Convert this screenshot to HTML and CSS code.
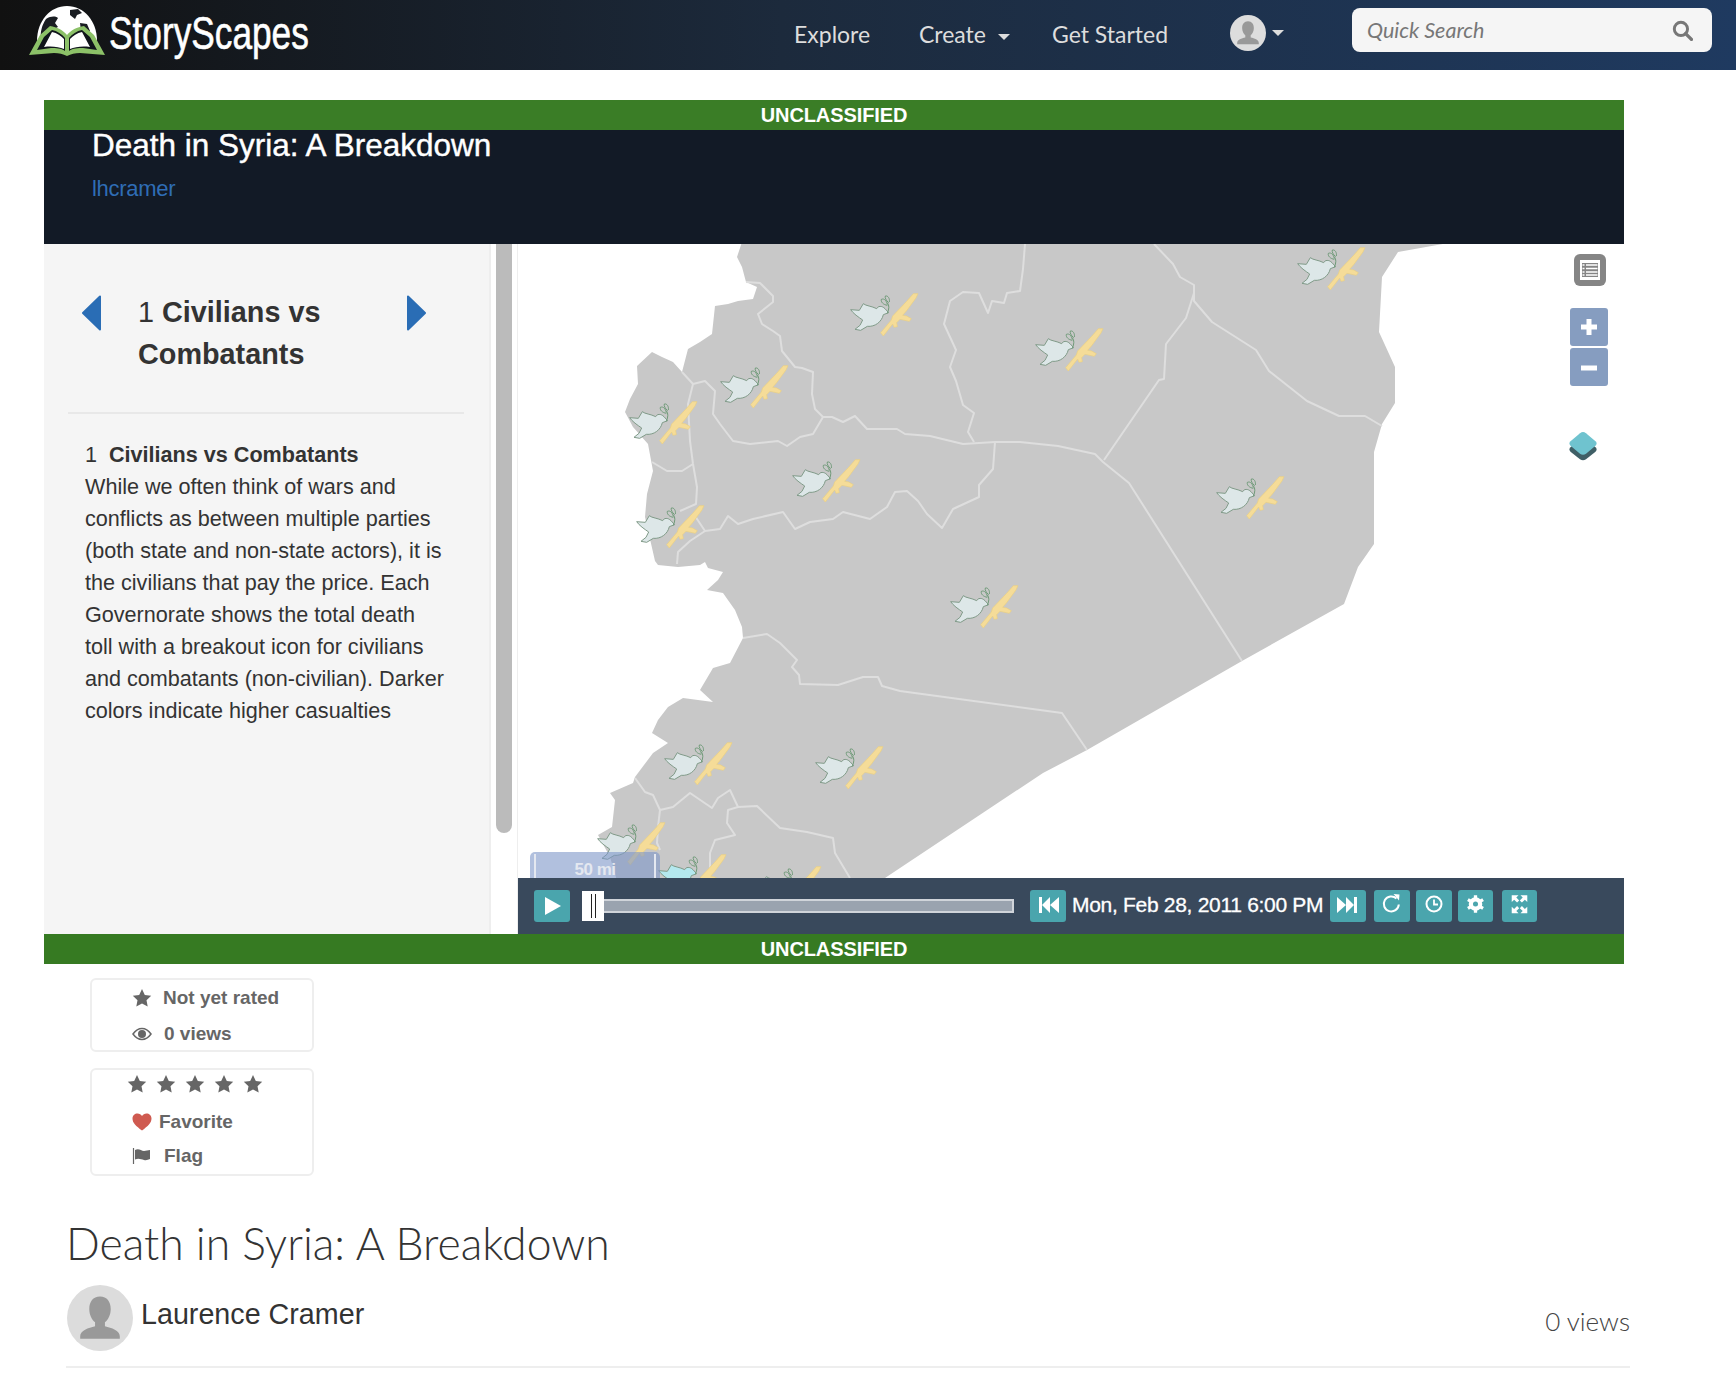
FILE: index.html
```html
<!DOCTYPE html>
<html lang="en">
<head>
    <meta charset="UTF-8">
    <title>Death in Syria: A Breakdown</title>
    <link rel="stylesheet" href="styles.css">
</head>
<body>
    <!-- shared icons -->
    <svg class="defs" width="0" height="0">
        <symbol id="star" viewBox="0 0 20 20"><path d="M10 1l2.800 6 6.400.8-4.700 4.400 1.200 6.400L10 15.400l-5.700 3.200 1.200-6.400L.8 7.800 7.200 7z"/></symbol>
        <symbol id="person" viewBox="0 0 40 40"><path d="M20 7c-4.300 0-6.500 3.300-6.500 7.500 0 3.500 1.500 6.500 3.500 8v2.500c-4 1-9 2.500-9 6v1.500h24V31c0-3.500-5-5-9-6v-2.500c2-1.500 3.500-4.500 3.500-8C26.500 10.300 24.300 7 20 7z"/></symbol>
    </svg>

    <nav class="navbar">
        <a class="brand" href="#">
            <svg class="brand-logo" viewBox="0 0 78 52" width="78" height="52">
                <path d="M9 36C9 16 22 1 39 1s30 15 30 35z" fill="#fff"/>
                <path d="M18 14c5-3 9-3 12-1l-3 5 3 4-6 3-3 8-8 1c-1-7 1-14 5-20zM42 5l8-1 4 4-5 2-2 4-5-4zM52 18l7 1 3 7-5 5-4-5z" fill="#1a1d22"/>
                <path d="M1 50L12 30l10-9c7 1 13 4 17 9 4-5 10-8 17-9l10 9 11 20-25-2c-5 0-9 1-13 3-4-2-8-3-13-3z" fill="#8cc168"/>
                <path d="M9 45l7-13 8-7c5 1 10 4 13 8v13c-4-3-9-3-14-3zM69 45l-7-13-8-7c-5 1-10 4-13 8v13c4-3 9-3 14-3z" fill="#10151b"/>
                <path d="M16 42l8-15c5 1 9 4 12 7v10c-5-2-12-3-20-2zM62 42l-8-15c-5 1-9 4-12 7v10c5-2 12-3 20-2z" fill="#fff"/>
            </svg>
            <span class="brand-name">StoryScapes</span>
        </a>
        <ul class="nav-links">
            <li class="nav-explore">Explore</li>
            <li class="nav-create">Create <span class="caret"></span></li>
            <li class="nav-start">Get Started</li>
        </ul>
        <div class="nav-user">
            <span class="nav-avatar"><svg width="36" height="36"><use href="#person"/></svg></span>
            <span class="caret"></span>
        </div>
        <div class="search-box">
            <span class="search-text">Quick Search</span>
            <svg class="search-icon" viewBox="0 0 20 20" width="21" height="21"><circle cx="8.500" cy="8.500" r="6.300" fill="none" stroke="#777" stroke-width="2.800"/><path d="M13 13l5.500 5.500" stroke="#777" stroke-width="3.200" stroke-linecap="round"/></svg>
        </div>
    </nav>

    <section class="story">
        <div class="banner">UNCLASSIFIED</div>
        <header class="story-head">
            <h1>Death in Syria: A Breakdown</h1>
            <a class="story-owner" href="#">lhcramer</a>
        </header>
        <div class="story-body">
            <div class="side">
                <div class="side-panel">
                    <div class="chapter-head">
                        <svg class="chapter-arrow" viewBox="0 0 20 36" width="20" height="36"><path d="M18 1.500v33L1 18z" fill="#2a6db5" stroke="#2a6db5" stroke-width="2" stroke-linejoin="round"/></svg>
                        <h2><span class="num">1</span> Civilians vs Combatants</h2>
                        <svg class="chapter-arrow" viewBox="0 0 20 36" width="20" height="36"><path d="M2 1.500v33L19 18z" fill="#2a6db5" stroke="#2a6db5" stroke-width="2" stroke-linejoin="round"/></svg>
                    </div>
                    <div class="chapter-text">
                        <p class="chapter-title"><span class="num">1</span><b>Civilians vs Combatants</b></p>
                        <p>While we often think of wars and conflicts as between multiple parties (both state and non-state actors), it is the civilians that pay the price. Each Governorate shows the total death toll with a breakout icon for civilians and combatants (non-civilian). Darker colors indicate higher casualties</p>
                    </div>
                </div>
                <div class="scroll-track"><div class="scroll-thumb"></div></div>
            </div>
            <div class="map-col">
                <div class="map">
                    <svg class="map-svg" viewBox="0 0 1106 634">
                        <defs>
                            <g id="marker" transform="scale(.3333)">
                                <path d="M2 53L28 55 40 35C48 42 65 42 80 50 84 42 95 40 105 50L116 62 100 68C95 90 75 105 52 103L32 115 15 112 30 100 38 84C25 75 10 65 2 53z" fill="currentColor" stroke="#7f9a88" stroke-width="3"/>
                                <path d="M112 64C118 50 118 40 112 32M112 40C100 38 92 30 94 22 104 18 110 28 112 38M116 32C108 26 104 16 106 12 114 10 120 20 118 30" fill="none" stroke="#6f9a78" stroke-width="3"/>
                                <path d="M92 122L124 84 128 72 170 28 190 5 204 5 198 18 170 56 158 70 170 72 184 80 178 88 150 82 140 92 142 104 132 106 128 96 100 132z" fill="#f5dc98" stroke="#ecd080" stroke-width="2" stroke-linejoin="round"/>
                            </g>
                        </defs>
                        <path class="land" d="M224 -2L219 13 224 23 228 38 239 43 235 55 220 57 210 60 197 62 194 90 182 98 170 105 164 128 155 118 144 113 134 108 119 122 120 140 112 155 107 168 115 183 130 200 135 227 129 250 127 273 137 317 140 321 160 323 182 321 187 318 190 324 205 328 200 336 189 346 205 349 217 366 224 383 225 394 212 419 195 424 182 446 195 458 165 454 150 463 140 476 134 489 150 499 135 509 117 533 115 539 92 549 97 556 94 583 80 591 92 613 100 640 358 640 382 624 525 529 569 506 724 417 826 360 840 323 856 300 856 208 864 180 877 159 877 123 861 88 864 33 880 8 936 -2z"/>
                        <path class="line" d="M228 38L242 39 255 52 255 58 240 70 244 80 255 87 262 92 264 107 277 123 284 124 295 128 294 150 297 165 305 173 314 173 325 178 337 172 349 185 379 185 387 190 412 192 445 200 477 198 502 198 540 202 577 210 585 218 611 239 724 417"/>
                        <path class="line" d="M305 173L295 190 282 193 269 202 260 197 232 200 215 197 202 180 195 170 197 147 187 137 175 140 164 128"/>
                        <path class="line" d="M175 140L170 160 172 197 175 220 179 243 178 260 162 267M134 218L149 227 164 227 175 220"/>
                        <path class="line" d="M177 272L187 287 202 285 210 272 220 280 235 275 265 268 277 285 292 278 315 275 325 268 352 275 369 263 377 248 389 247 400 257 409 270 424 284 435 265 461 253 461 241 475 225 477 198M187 287L172 297 160 308 159 320"/>
                        <path class="line" d="M507 0L505 25 502 47 489 49 486 59 474 57 470 69 461 49 445 48 432 57 426 80 438 106 432 123 438 137 445 161 456 169 450 188 456 198"/>
                        <path class="line" d="M636 0L655 20 662 33 676 41 676 57 694 78 738 106 751 127 789 157 821 172 847 172 864 182M676 49L668 74 648 100 646 135 641 136 586 216"/>
                        <path class="line" d="M225 394L249 390 262 399 279 416 274 423 281 431 282 440 320 441 345 433 360 433 364 442 382 447 544 469 569 506"/>
                        <path class="line" d="M117 534L127 548 135 551 142 566 155 563 172 549 194 564 200 554 212 546 220 563 239 562 262 584 289 588 315 594 317 609 332 634M142 566L140 583 139 599 142 606M220 563L210 566 209 579 217 591 197 596 192 609 192 634"/>
                        <g class="markers">
                            <use href="#marker" x="332" y="48"/>
                            <use href="#marker" x="517" y="83"/>
                            <use href="#marker" x="779" y="2"/>
                            <use href="#marker" x="202" y="120"/>
                            <use href="#marker" x="111" y="156"/>
                            <use href="#marker" x="274" y="214"/>
                            <use href="#marker" x="118" y="260"/>
                            <use href="#marker" x="698" y="231"/>
                            <use href="#marker" x="432" y="340"/>
                            <use href="#marker" x="146" y="497"/>
                            <use href="#marker" x="297" y="501"/>
                            <use href="#marker" x="79" y="577"/>
                            <use class="marker-tint" href="#marker" x="140" y="609"/>
                            <use href="#marker" x="235" y="621"/>
                        </g>
                    </svg>
                    <div class="map-legend-btn">
                        <svg viewBox="0 0 32 32" width="32" height="32"><rect width="32" height="32" rx="6" fill="#858585"/><rect x="6" y="6" width="20" height="20" fill="#fff"/><path d="M8 9h16v14H8z" fill="#858585"/><path d="M8.500 11h2M12 11h11.500M8.500 14.500h2M12 14.500h11.500M8.500 18h2M12 18h11.500M8.500 21h2M12 21h11.500" stroke="#fff" stroke-width="1.300"/></svg>
                    </div>
                    <div class="map-zoom">
                        <span class="zoom-btn">
                            <svg viewBox="0 0 38 38" width="38" height="38"><path d="M19 11v16M11 19h16" stroke="#fff" stroke-width="5"/></svg>
                        </span>
                        <span class="zoom-btn">
                            <svg viewBox="0 0 38 38" width="38" height="38"><path d="M11 20h16" stroke="#fff" stroke-width="5"/></svg>
                        </span>
                    </div>
                    <svg class="map-layers" viewBox="0 0 30 30" width="30" height="30"><path d="M15 7c1 0 2 .5 3 1.300l9.500 8c1.500 1.300 1.500 3 0 4.400l-9.500 7.500c-2 1.500-4 1.500-6 0l-9.500-7.500c-1.500-1.400-1.500-3.100 0-4.400l9.500-8C13 7.500 14 7 15 7z" fill="#3f5f66"/><path d="M15 1c1 0 2 .5 3 1.300l9.500 8c1.500 1.300 1.500 3 0 4.400l-9.500 8c-2 1.500-4 1.500-6 0l-9.500-8c-1.500-1.400-1.500-3.100 0-4.400l9.500-8C13 1.500 14 1 15 1z" fill="#6fc3cf"/></svg>
                    <div class="map-scale"><span>50 mi</span></div>
                </div>
                <div class="controls">
                    <span class="ctl-btn">
                        <svg viewBox="0 0 36 32" width="36" height="32"><path d="M11 7l16 9-16 9z" fill="#fff"/></svg>
                    </span>
                    <div class="slider">
                        <span class="slider-handle"><i></i><i></i></span>
                        <span class="slider-track"></span>
                    </div>
                    <span class="ctl-btn">
                        <svg viewBox="0 0 36 32" width="36" height="32"><path d="M9 7h3v16H9zM20 7v16l-8-8zM29 7v16l-9-8z" fill="#fff"/></svg>
                    </span>
                    <span class="ctl-date">Mon, Feb 28, 2011 6:00 PM</span>
                    <span class="ctl-btn">
                        <svg viewBox="0 0 36 32" width="36" height="32"><path d="M7 7v16l9-8zM16 7v16l8-8zM24 7h3v16h-3z" fill="#fff"/></svg>
                    </span>
                    <span class="ctl-btn ctl-tight">
                        <svg viewBox="0 0 36 32" width="36" height="32"><path d="M22.500 8.500a7.500 7.500 0 1 0 2.300 6" fill="none" stroke="#fff" stroke-width="2"/><path d="M19.500 4l6 .5-.5 6z" fill="#fff"/></svg>
                    </span>
                    <span class="ctl-btn ctl-tight">
                        <svg viewBox="0 0 36 32" width="36" height="32"><circle cx="18" cy="14" r="7.500" fill="none" stroke="#fff" stroke-width="2"/><path d="M18 9.500v5h4" fill="none" stroke="#fff" stroke-width="1.800"/></svg>
                    </span>
                    <span class="ctl-btn ctl-gear">
                        <svg viewBox="0 0 36 32" width="35" height="32"><circle cx="18" cy="14" r="5" fill="none" stroke="#fff" stroke-width="4"/><path d="M18 5v18M10.200 9.500l15.600 9M10.200 18.500l15.600-9" stroke="#fff" stroke-width="3.400"/><circle cx="18" cy="14" r="2.600" fill="#4aa5ad"/></svg>
                    </span>
                    <span class="ctl-btn ctl-gear">
                        <svg viewBox="0 0 36 32" width="35" height="32"><path d="M10 5h7l-2.300 2.300 3 3-2.200 2.200-3-3L10 11.800zM26 5h-7l2.300 2.300-3 3 2.200 2.200 3-3 2.500 2.300zM10 23.500h7l-2.300-2.300 3-3-2.200-2.200-3 3-2.500-2.300zM26 23.500h-7l2.300-2.300-3-3 2.200-2.200 3 3 2.500-2.300z" fill="#fff"/></svg>
                    </span>
                </div>
            </div>
        </div>
        <div class="banner banner-bottom">UNCLASSIFIED</div>
    </section>

    <section class="rating">
        <div class="rate-card">
            <div class="rate-row">
                <svg class="rate-icon" width="20" height="20"><use href="#star"/></svg>
                <span>Not yet rated</span>
            </div>
            <div class="rate-row rate-views">
                <svg class="rate-icon" viewBox="0 0 20 14" width="20" height="14"><path d="M1 7c2.500-3.500 5.500-5.500 9-5.500S16.500 3.500 19 7c-2.500 3.500-5.500 5.500-9 5.500S3.500 10.500 1 7z" fill="none" stroke="#666" stroke-width="1.500"/><circle cx="10" cy="7" r="4" fill="#666"/></svg>
                <span>0 views</span>
            </div>
        </div>
        <div class="rate-card rate-card-user">
            <div class="rate-stars">
                <svg width="20" height="20"><use href="#star"/></svg>
                <svg width="20" height="20"><use href="#star"/></svg>
                <svg width="20" height="20"><use href="#star"/></svg>
                <svg width="20" height="20"><use href="#star"/></svg>
                <svg width="20" height="20"><use href="#star"/></svg>
            </div>
            <div class="rate-row rate-fav">
                <svg class="rate-icon" viewBox="0 0 20 18" width="20" height="18"><path d="M10 17.500C4 13 .5 10 .5 5.500.5 2.500 2.800.5 5.500.5 7.500.5 9 1.500 10 3c1-1.500 2.500-2.500 4.500-2.500 2.700 0 5 2 5 5 0 4.500-3.500 7.500-9.500 12z" fill="#cf5a50"/></svg>
                <span>Favorite</span>
            </div>
            <div class="rate-row rate-flag">
                <svg class="rate-icon" viewBox="0 0 20 16" width="20" height="16"><path d="M1.500 0v16" stroke="#666" stroke-width="1.200"/><path d="M3 2c4-2 6 1 9 1 2 0 4-1 6-1v9c-2 1-4 1.500-6 1-3-.5-5-2-9-.5z" fill="#666"/></svg>
                <span>Flag</span>
            </div>
        </div>
    </section>

    <section class="details">
        <h2 class="details-title">Death in Syria: A Breakdown</h2>
        <div class="details-meta">
            <span class="author-avatar"><svg width="66" height="66"><use href="#person"/></svg></span>
            <span class="author-name">Laurence Cramer</span>
            <span class="view-count">0 views</span>
        </div>
    </section>
</body>
</html>
```

FILE: styles.css
```css
html, body {
    margin: 0;
    padding: 0;
}
body {
    font-family: "Liberation Sans", Arial, sans-serif;
    background-color: #fff;
    color: #333;
    overflow: hidden;
}
a {
    text-decoration: none;
}
.defs {
    display: block;
    height: 0;
}

/* top bar */
.navbar {
    display: flex;
    align-items: center;
    height: 70px;
    background: linear-gradient(90deg, #111 0%, #1c2a3c 45%, #1f3a60 100%);
    font-family: Lato, sans-serif;
}
.brand {
    display: flex;
    align-items: center;
    margin-left: 28px;
    width: 766px;
}
.brand-logo {
    margin-top: -8px;
}
.brand-name {
    margin: -5px 0 0 3px;
    font-family: "Liberation Sans", sans-serif;
    font-size: 47px;
    color: #fff;
    -webkit-text-stroke: 0.6px #fff;
    transform: scaleX(0.75);
    transform-origin: left center;
}
.nav-links {
    display: flex;
    list-style: none;
    margin: -2px 0 0;
    padding: 0;
    font-size: 23px;
    color: #ddd;
}
.nav-explore {
    width: 125px;
}
.nav-create {
    width: 133px;
}
.nav-start {
    width: 178px;
}
.caret {
    display: inline-block;
    width: 0;
    height: 0;
    margin-left: 6px;
    vertical-align: 3px;
    border-top: 6px solid #ddd;
    border-left: 6px solid transparent;
    border-right: 6px solid transparent;
}
.nav-user {
    display: flex;
    align-items: center;
    width: 122px;
    margin-top: -5px;
}
.nav-avatar {
    display: block;
    width: 36px;
    height: 36px;
    border-radius: 50%;
    background-color: #ddd;
    fill: #999;
    overflow: hidden;
}
.search-box {
    display: flex;
    align-items: center;
    justify-content: space-between;
    box-sizing: border-box;
    width: 360px;
    height: 44px;
    margin-top: -10px;
    padding: 0 19px 0 15px;
    background-color: #f5f5f5;
    border-radius: 8px;
}
.search-text {
    font-style: italic;
    font-size: 21.5px;
    color: #777;
}

/* story box */
.story {
    width: 1580px;
    margin: 30px 0 0 44px;
}
.banner {
    height: 30px;
    line-height: 30px;
    background-color: #3a7d26;
    color: #fff;
    font-size: 20px;
    font-weight: bold;
    text-align: center;
    letter-spacing: -0.1px;
}
.banner-bottom {
    background-color: #367a22;
}
.story-head {
    box-sizing: border-box;
    height: 114px;
    padding-left: 48px;
    background-color: #121a26;
}
.story-head h1 {
    margin: 0;
    font-size: 31.5px;
    font-weight: normal;
    line-height: 30px;
    color: #fff;
    -webkit-text-stroke: 0.4px #fff;
}
.story-owner {
    display: block;
    margin-top: 15px;
    font-size: 22px;
    line-height: 28px;
    letter-spacing: -0.3px;
    color: #2f6db5;
}
.story-body {
    display: flex;
    height: 690px;
}
.side {
    display: flex;
    box-sizing: border-box;
    width: 474px;
    border-right: 1px solid #eee;
}
.side-panel {
    box-sizing: border-box;
    width: 447px;
    padding: 0 25px 0 24px;
    background-color: #f5f5f5;
    border-right: 2px solid #eee;
}
.chapter-head {
    display: flex;
    align-items: flex-start;
    padding: 47px 0 0 14px;
    height: 121px;
    border-bottom: 2px solid #e8e8e8;
}
.chapter-arrow {
    flex: none;
    margin-top: 4px;
}
.chapter-head h2 {
    width: 304px;
    margin: 0;
    padding-left: 36px;
    box-sizing: border-box;
    font-size: 28.8px;
    line-height: 42px;
    font-weight: bold;
}
.num {
    font-weight: normal;
}
.chapter-text {
    padding: 25px 18px 0 17px;
    font-size: 21.6px;
    line-height: 32px;
}
.chapter-text p {
    margin: 0;
}
.chapter-title .num {
    display: inline-block;
    width: 24px;
}
.scroll-track {
    padding: 0 5px;
}
.scroll-thumb {
    width: 16px;
    height: 589px;
    background-color: #bbb;
    border-radius: 0 0 8px 8px;
}
.map-col {
    width: 1106px;
}

/* map */
.map {
    position: relative;
    height: 634px;
    overflow: hidden;
    background-color: #fff;
}
.map-svg {
    display: block;
    width: 1106px;
    height: 634px;
}
.land {
    fill: #c8c8c8;
}
.line {
    fill: none;
    stroke: #dedede;
    stroke-width: 2px;
    stroke-linejoin: round;
}
.markers {
    color: #dde7e8;
}
.marker-tint {
    color: #b4e8ee;
}
.map-legend-btn {
    position: absolute;
    top: 10px;
    left: 1056px;
    height: 32px;
}
.map-zoom {
    position: absolute;
    top: 64px;
    left: 1052px;
    display: flex;
    flex-direction: column;
    gap: 2px;
}
.zoom-btn {
    display: block;
    width: 38px;
    height: 38px;
    background-color: #869dc0;
    border-radius: 3px;
}
.map-layers {
    position: absolute;
    top: 187px;
    left: 1050px;
}
.map-scale {
    position: absolute;
    left: 12px;
    bottom: 0;
    box-sizing: border-box;
    width: 130px;
    height: 26px;
    padding: 2px 4px 0;
    background-color: rgba(125, 150, 200, 0.6);
    border-radius: 5px 5px 0 0;
}
.map-scale span {
    display: block;
    height: 24px;
    border-left: 2px solid #e4e8f0;
    border-right: 2px solid #e4e8f0;
    text-align: center;
    font-size: 17px;
    font-weight: bold;
    line-height: 32px;
    letter-spacing: -0.5px;
    color: #e4e8f0;
    overflow: hidden;
}

/* playback bar */
.controls {
    display: flex;
    align-items: center;
    height: 56px;
    padding-left: 16px;
    background-color: #39495c;
}
.ctl-btn {
    display: block;
    width: 36px;
    height: 32px;
    margin-right: 8px;
    background-color: #4aa5ad;
    border-radius: 3px;
}
.ctl-tight {
    margin-right: 6px;
}
.ctl-gear {
    width: 35px;
    margin-right: 9px;
}
.slider {
    display: flex;
    align-items: center;
    margin: 0 16px 0 4px;
}
.slider-handle {
    display: flex;
    justify-content: center;
    gap: 3px;
    width: 22px;
    height: 30px;
    padding: 3px 0;
    box-sizing: border-box;
    background-color: #fff;
}
.slider-handle i {
    display: block;
    width: 1px;
    background-color: #222;
}
.slider-track {
    display: block;
    box-sizing: border-box;
    width: 410px;
    height: 14px;
    background-color: #9aa3af;
    border: 2px solid #d0d4da;
    border-left: 0;
}
.ctl-date {
    width: 258px;
    margin: 0 0 2px -2px;
    font-size: 21px;
    color: #fff;
    white-space: nowrap;
    letter-spacing: -0.3px;
    -webkit-text-stroke: 0.3px #fff;
}

/* rating boxes */
.rating {
    margin: 14px 0 0 90px;
    width: 224px;
    color: #666;
    font-size: 19px;
    font-weight: bold;
}
.rate-card {
    box-sizing: border-box;
    height: 74px;
    padding: 0 0 0 40px;
    border: 2px solid #eee;
    border-radius: 6px;
}
.rate-card .rate-row:first-child {
    height: 36px;
}
.rate-card-user {
    height: 108px;
    margin-top: 16px;
}
.rate-row {
    display: flex;
    align-items: center;
    height: 35px;
}
.rate-row svg {
    fill: #666;
}
.rate-icon {
    flex: none;
    margin-right: 11px;
}
.rate-views .rate-icon,
.rate-flag .rate-icon {
    margin-right: 12px;
}
.rate-fav .rate-icon {
    margin-right: 7px;
}
.rate-flag {
    height: 33px;
}
.rate-stars {
    display: flex;
    gap: 9px;
    height: 34px;
    margin-left: -5px;
    padding-top: 4px;
    box-sizing: border-box;
    fill: #666;
}

/* bottom details */
.details {
    box-sizing: border-box;
    margin-left: 66px;
    width: 1564px;
    height: 192px;
    padding-top: 40px;
    border-bottom: 2px solid #eee;
    font-family: Lato, sans-serif;
}
.details-title {
    margin: 0;
    font-size: 44.5px;
    font-weight: 300;
    line-height: 54px;
    color: #333;
}
.details-meta {
    display: flex;
    align-items: flex-start;
    margin-top: 15px;
}
.author-avatar {
    display: block;
    width: 66px;
    height: 66px;
    margin-left: 1px;
    border-radius: 50%;
    background-color: #dcdcdc;
    fill: #999;
    overflow: hidden;
}
.author-name {
    margin: 11px 0 0 8px;
    font-family: "Liberation Sans", sans-serif;
    font-size: 28.7px;
    line-height: 36px;
}
.view-count {
    margin: 19px 0 0 auto;
    font-size: 26px;
    font-weight: 300;
    line-height: 34px;
    color: #444;
}
```
